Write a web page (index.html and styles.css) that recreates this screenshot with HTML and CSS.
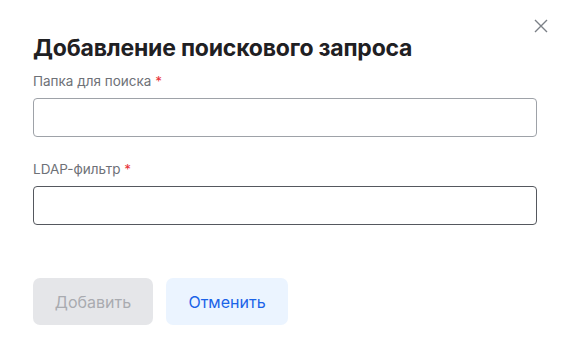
FILE: index.html
```html
<!doctype html>
<html lang="ru">
<head>
    <meta charset="UTF-8">
    <title>Добавление поискового запроса</title>
    <link rel="stylesheet" href="styles.css">
</head>
<body>
    <div class="dialog">
        <button class="close" aria-label="Закрыть">
            <svg width="14" height="14" viewBox="0 0 14 14"><path d="M1 1L13 13M13 1L1 13" stroke="#7b8087" stroke-width="1.4" fill="none"/></svg>
        </button>
        <h1 class="title">Добавление поискового запроса</h1>
        <div class="field">
            <label class="label" for="folder">Папка для поиска <span class="req">*</span></label>
            <input class="input" type="text" id="folder">
        </div>
        <div class="field">
            <label class="label" for="ldap">LDAP-фильтр <span class="req">*</span></label>
            <input class="input input-active" type="text" id="ldap">
        </div>
        <div class="actions">
            <button class="btn btn-disabled" disabled>Добавить</button>
            <button class="btn btn-cancel">Отменить</button>
        </div>
    </div>
</body>
</html>
```

FILE: styles.css
```css
body{
    margin: 0;
    background: #ffffff;
    font-family: Inter, "Noto Sans", sans-serif;
}
.dialog{
    position: relative;
    width: 573px;
    height: 363px;
    box-sizing: border-box;
    padding: 33px 36px 0 33px;
}
.close{
    position: absolute;
    top: 19px;
    right: 25px;
    padding: 0;
    border: none;
    background: none;
    width: 14px;
    height: 14px;
    cursor: pointer;
}
.close svg{
    display: block;
}
.title{
    margin: 0 0 10px;
    font-size: 23px;
    line-height: 30px;
    font-weight: 700;
    color: #1f2023;
    letter-spacing: -0.2px;
}
.field{
    display: flex;
    flex-direction: column;
    gap: 9px;
    margin-bottom: 24px;
}
.label{
    font-size: 13.5px;
    line-height: 16px;
    color: #6e7177;
}
.req{
    color: #e8343a;
}
.input{
    height: 39px;
    box-sizing: border-box;
    border: solid 1px #9ea2a8;
    border-radius: 4px;
    outline: none;
    font-family: inherit;
    font-size: 14px;
    padding: 0 10px;
}
.input-active{
    border-color: #55585e;
}
.actions{
    display: flex;
    gap: 13px;
    margin-top: 53px;
}
.btn{
    height: 47px;
    padding: 0 20px;
    border: none;
    border-radius: 7px;
    font-family: inherit;
    font-size: 16px;
    cursor: pointer;
}
.btn-disabled{
    width: 120px;
    background: #e5e6e9;
    color: #a9abb0;
    cursor: default;
}
.btn-cancel{
    width: 122px;
    background: #ebf4ff;
    color: #1a63e8;
}
```
